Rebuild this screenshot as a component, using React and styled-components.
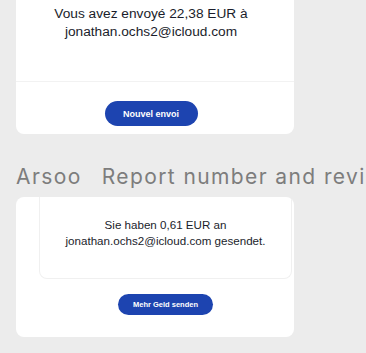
import React from 'react'
import styled, { createGlobalStyle } from 'styled-components'

const GlobalStyle = createGlobalStyle`
    body{
        margin:0;
        background:#ececec;
        font-family:"Liberation Sans", Arial, sans-serif;
    }
`

const App = () => {
  return (
    <Page>
        <GlobalStyle />
        <Card>
            <Message>
                Vous avez envoyé 22,38 EUR à<br />jonathan.ochs2@icloud.com
            </Message>
            <Footer>
                <SendButton>Nouvel envoi</SendButton>
            </Footer>
        </Card>
        <Heading>
            <span>Arsoo</span>
            <span>Report number and review</span>
        </Heading>
        <SmallCard>
            <Inner>
                <SmallMessage>
                    Sie haben 0,61 EUR an<br />jonathan.ochs2@icloud.com gesendet.
                </SmallMessage>
            </Inner>
            <SmallButton>Mehr Geld senden</SmallButton>
        </SmallCard>
    </Page>
  )
}

export default App

const Page = styled.div`
    width:366px;
    height:353px;
    overflow:hidden;
    padding-left:16px;
    box-sizing:border-box;
    display:flex;
    flex-direction:column;
`
const Card = styled.div`
    width:278px;
    background:#fff;
    border-radius:0 0 8px 8px;
    display:flex;
    flex-direction:column;
`
const Message = styled.div`
    height:82px;
    box-sizing:border-box;
    padding:5px 8px 0 0;
    text-align:center;
    font-size:13.7px;
    line-height:18px;
    color:#1a1d2b;
    border-bottom:1px solid #f2f2f2;
`
const Footer = styled.div`
    display:flex;
    justify-content:center;
    padding:19px 8px 8px 0;
`
const SendButton = styled.button`
    width:93px;
    height:25px;
    border:none;
    border-radius:13px;
    background:#1d44b0;
    color:#fff;
    font-family:inherit;
    font-weight:bold;
    font-size:9px;
    padding:0;
`
const Heading = styled.div`
    display:flex;
    gap:20px;
    white-space:nowrap;
    margin-top:31px;
    font-family:Inter, "Liberation Sans", sans-serif;
    font-size:21px;
    letter-spacing:1.4px;
    line-height:24px;
    color:#7d7d7d;
`
const SmallCard = styled.div`
    width:278px;
    margin-top:8px;
    height:140px;
    box-sizing:border-box;
    padding:0 2px 0 23px;
    background:#fff;
    border-radius:8px;
    overflow:hidden;
    display:flex;
    flex-direction:column;
    align-items:center;
`
const Inner = styled.div`
    align-self:stretch;
    height:82px;
    box-sizing:border-box;
    border:1px solid #f0f0f0;
    border-top:none;
    border-radius:0 0 8px 8px;
`
const SmallMessage = styled.div`
    padding-top:20px;
    text-align:center;
    font-size:11.6px;
    line-height:15.5px;
    color:#1a1d2b;
`
const SmallButton = styled.button`
    margin-top:15px;
    width:95px;
    height:21px;
    border:none;
    border-radius:11px;
    background:#1d44b0;
    color:#fff;
    font-family:inherit;
    font-weight:bold;
    font-size:7.5px;
    padding:0;
`
